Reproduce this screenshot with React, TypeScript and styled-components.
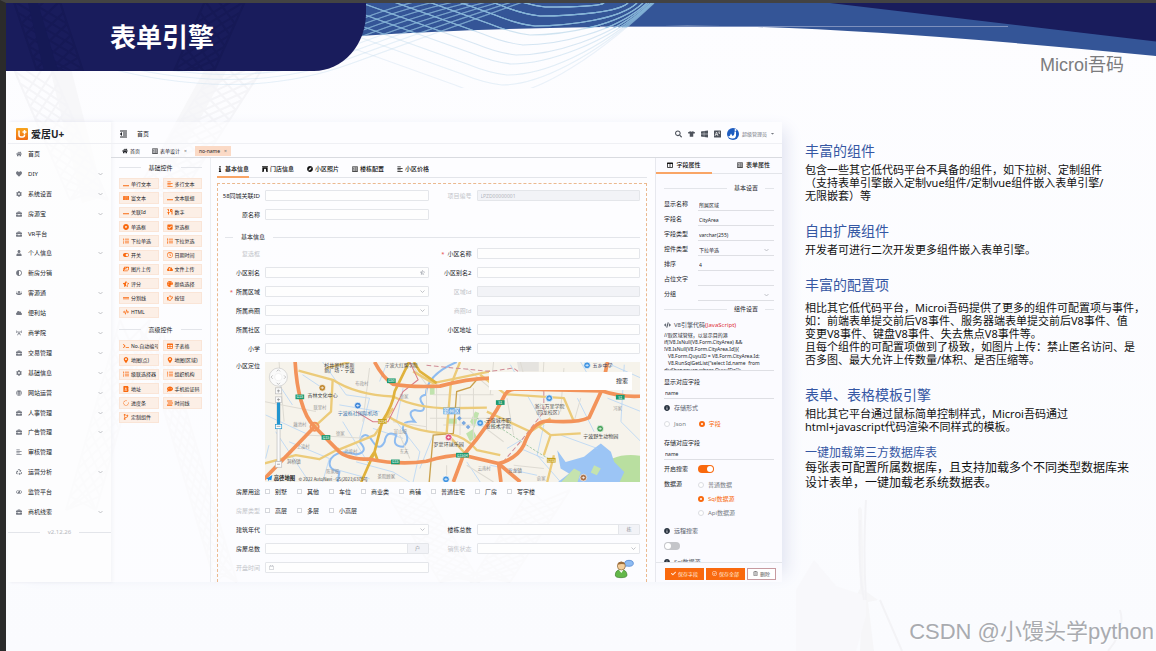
import React, { useId } from 'react';
import styled, { createGlobalStyle } from 'styled-components';
import type { IconType } from 'react-icons';
import {
  FaHome, FaHeart, FaCog, FaBriefcase, FaUser, FaAdjust, FaUsers, FaCloud, FaBroadcastTower, FaGlobe,
  FaAlignLeft, FaRecycle, FaRegEye, FaNewspaper, FaDotCircle, FaCheckSquare, FaListUl, FaList, FaToggleOn,
  FaRegClock, FaImages, FaCloudUploadAlt, FaStarHalfAlt, FaPalette, FaGripLines, FaRegHandPointRight,
  FaCode, FaTerminal, FaTable, FaMapMarkerAlt, FaListOl, FaAddressBook, FaCommentDots, FaSpinner, FaStream,
  FaCodeBranch, FaInfo, FaArchway, FaCompass, FaRegListAlt, FaOutdent, FaSearch, FaTshirt, FaWindows,
  FaCaretDown, FaInfoCircle, FaRegCalendar, FaColumns, FaCheck, FaRegCheckCircle, FaRegTrashAlt,
} from 'react-icons/fa';

const orange = '#f9690e';
const line = '#e3e5ea';
const ink = '#222429';

const Global = createGlobalStyle`
  *, *::before, *::after { box-sizing: border-box; }
  body { margin: 0; background: #2b2b2b; font-family: "Noto Sans", "Noto Sans CJK SC", sans-serif; }
  h1, h2, p, ul { margin: 0; padding: 0; }
  ul { list-style: none; }
  button, input, select, textarea { font: inherit; color: inherit; margin: 0; padding: 0; border: 0; background: none; border-radius: 0; }
  a { color: inherit; text-decoration: none; }
`;

/* ---------- slide frame ---------- */
const Slide = styled.div`
  position: relative;
  min-height: 100vh;
  border-left: 6px solid #2b2b2b;
  border-top: 3px solid #434343;
  background: linear-gradient(#fdfdff, #fafbfe);
  overflow: hidden;
`;
const Backdrop = styled.svg`
  position: absolute;
  inset: 0;
  width: 100%;
  height: 648px;
`;
const Header = styled.header`
  position: relative;
  display: flex;
  justify-content: space-between;
  align-items: flex-start;
  height: 119px;
`;
const TitleBlock = styled.div`
  position: relative;
  width: 360px;
  height: 68px;
  padding-left: 104px;
  display: flex;
  align-items: center;
  overflow: hidden;
  border-bottom-right-radius: 52px 58px;
  background: #191c5c;
`;
const TitlePattern = styled.svg`
  position: absolute;
  inset: 0;
  width: 100%;
  height: 100%;
`;
const Title = styled.h1`
  position: relative;
  color: #fff;
  font-size: 26px;
  line-height: 36px;
  font-weight: 700;
`;
const Brand = styled.div`
  margin: 50px 32px 0 0;
  color: #7c7c7e;
  font-family: "Liberation Sans", "Noto Sans CJK SC", sans-serif;
  font-size: 18px;
  line-height: 24px;
`;
const Body = styled.div`
  position: relative;
  display: flex;
  align-items: flex-start;
`;

/* ---------- app window ---------- */
const AppWindow = styled.section`
  flex: 1;
  min-width: 0;
  display: grid;
  grid-template-columns: 103px minmax(0, 1fr);
  grid-template-rows: minmax(0, 1fr);
  margin-left: 2px;
  height: 460px;
  font-size: 6px;
  line-height: 8px;
  color: ${ink};
  box-shadow: 12px 0 16px -8px #dfe2f0;
`;
const Sidebar = styled.nav`
  display: flex;
  flex-direction: column;
  background: #fefefeb0;
  box-shadow: 2px 0 3px #e6e7ee;
`;
const Logo = styled.div`
  display: flex;
  align-items: center;
  gap: 3px;
  height: 22px;
  padding: 3px 0 0 8px;
  font-size: 10px;
  line-height: 12px;
  font-weight: 700;
  border-bottom: 1px solid #eeeff3;
`;
const Menu = styled.ul`
  display: grid;
  grid-auto-rows: 1fr;
  height: 378px;
`;
const MenuLink = styled.a`
  display: flex;
  align-items: center;
  height: 100%;
  padding: 0 8px;
  > svg:first-child { width: 6px; height: 6px; margin-right: 6px; color: #747882; }
  > span + svg { margin-left: auto; }
`;
const Version = styled.div`
  display: flex;
  align-items: center;
  gap: 8px;
  height: 20px;
  color: #b6b8bd;
  &::before, &::after { content: ''; flex: 1; border-top: 1px solid ${line}; }
`;
const Main = styled.div`
  display: flex;
  flex-direction: column;
  min-width: 0;
  min-height: 0;
  background: #fdfdff99;
`;
const TopBar = styled.div`
  display: flex;
  align-items: center;
  flex: none;
  height: 22px;
  padding: 2px 7px 0 9px;
  border-bottom: 1px solid #eff0f4;
`;
const TopTools = styled.div`
  display: flex;
  align-items: center;
  gap: 6px;
  margin-left: auto;
  color: #4e535c;
  svg { display: block; }
`;
const IconButton = styled.button`
  display: block;
  width: 7px;
  height: 8px;
  > svg { width: 100%; height: 100%; }
`;
const UserButton = styled.button`
  display: flex;
  align-items: center;
  gap: 3px;
  font-size: 5px;
  line-height: 8px;
  color: #777b83;
`;
const Crumb = styled.span`
  margin-left: 10px;
`;
const PageTabs = styled.div`
  display: flex;
  align-items: center;
  flex: none;
  gap: 4px;
  height: 14px;
  padding: 0 7px;
  font-size: 5px;
  border-bottom: 1px solid #d9dbe0;
`;
const PageTab = styled.a<{ $active?: boolean }>`
  display: flex;
  align-items: center;
  gap: 2px;
  height: 10px;
  padding: 0 4px;
  background: ${p => (p.$active ? '#fbdac6' : 'transparent')};
  > svg { width: 6px; height: 6px; }
`;
const CloseMark = styled.span`
  margin-left: 2px;
  color: #777;
`;
const Workspace = styled.div`
  flex: 1;
  min-height: 0;
  display: grid;
  grid-template-columns: 100px minmax(0, 1fr) 127px;
  grid-template-rows: minmax(0, 1fr);
`;

/* ---------- palette ---------- */
const Palette = styled.aside`
  padding: 0 8px;
  border-right: 1px solid #eceef2;
`;
const PaletteTitle = styled.div`
  display: flex;
  align-items: center;
  gap: 8px;
  height: 19px;
  color: ${ink};
  &::before, &::after { content: ''; flex: 1; border-top: 1px solid ${line}; }
`;
const ChipGrid = styled.div<{ $height: number }>`
  display: grid;
  grid-template-columns: 1fr 1fr;
  grid-auto-rows: 1fr;
  gap: 3px 4px;
  height: ${p => p.$height}px;
  margin: 1px 0 2px;
`;
const Chip = styled.button`
  display: flex;
  align-items: center;
  gap: 2px;
  padding-left: 3px;
  overflow: hidden;
  background: #fcefe6;
  border: 1px solid #fae5d7;
  font-size: 5px;
  line-height: 8px;
  white-space: nowrap;
  > svg { width: 6px; height: 6px; color: ${orange}; flex: none; }
`;

/* ---------- form ---------- */
const FormPane = styled.div`
  display: flex;
  flex-direction: column;
  padding: 0 8px 0 6px;
  min-width: 0;
`;
const FormTabs = styled.div`
  display: flex;
  flex: none;
  gap: 13px;
  height: 20px;
  margin-bottom: 5px;
  border-bottom: 1px solid ${line};
`;
const FormTab = styled.button<{ $active?: boolean }>`
  display: flex;
  align-items: center;
  gap: 2px;
  height: 20px;
  padding-top: 4px;
  color: #111;
  font-weight: 500;
  border-bottom: 2px solid ${p => (p.$active ? '#f9a566' : 'transparent')};
  > svg { width: 6px; height: 6px; }
`;
const Canvas = styled.form`
  flex: 1;
  padding: 2px 6px 0 0;
  border: 1px dashed #ebb98f;
  border-bottom: 0;
`;
const FormGrid = styled.div`
  display: grid;
  grid-template-columns: 47px minmax(0, 1fr) 48px minmax(0, 1fr);
  grid-auto-rows: 19px;
  align-items: center;
`;
const FieldLabel = styled.label<{ $dim?: boolean; $required?: boolean }>`
  justify-self: end;
  padding-right: 5px;
  white-space: nowrap;
  color: ${p => (p.$dim ? '#c3c5ca' : ink)};
  &::before { content: ${p => (p.$required ? "'*'" : "''")}; color: #e74c4c; margin-right: 3px; }
`;
const Control = styled.div<{ $filled?: boolean }>`
  position: relative;
  display: flex;
  align-items: center;
  height: 11px;
  border: 1px solid #e4e6ea;
  border-radius: 1px;
  color: #b4b7be;
  background: ${p => (p.$filled ? '#f2f3f7' : '#fefefe')};
  > input, > select { flex: 1; min-width: 0; width: 100%; height: 9px; padding: 0 3px; appearance: none; outline: none; font-size: 5px; opacity: 1; }
  > svg { flex: none; width: 5px; height: 5px; margin: 0 3px; }
`;
const Unit = styled.span`
  align-self: stretch;
  width: 21px;
  text-align: center;
  font-size: 5px;
  line-height: 9px;
  color: #8d9097;
  background: #f2f3f7;
  border-left: 1px solid #e4e6ea;
`;
const SectionRule = styled.div`
  display: flex;
  align-items: center;
  gap: 8px;
  height: 20px;
  padding: 6px 0 0 7px;
  &::before { content: ''; width: 8px; border-top: 1px solid ${line}; }
  &::after { content: ''; flex: 1; border-top: 1px solid ${line}; }
`;
const MapRow = styled.div`
  display: grid;
  grid-template-columns: 47px minmax(0, 1fr);
  padding: 4px 0 0;
`;
const MapFrame = styled.div`
  position: relative;
  height: 120px;
  overflow: hidden;
`;
const MapSvg = styled.svg`
  display: block;
  width: 100%;
  height: 100%;
  font-family: "Noto Sans CJK SC", sans-serif;
`;
const MapSearch = styled.div`
  position: absolute;
  top: 10px;
  right: 8px;
  display: flex;
  align-items: center;
  width: 143px;
  height: 18px;
  padding: 0 4px;
  background: #fefefe;
  > input { flex: 1; min-width: 0; outline: none; }
`;
const ChoiceRow = styled.div`
  display: grid;
  grid-template-columns: 47px minmax(0, 1fr);
  align-items: center;
  height: 19px;
`;
const ChoiceList = styled.div`
  display: flex;
  gap: 10px;
`;
const Check = styled.label`
  display: flex;
  align-items: center;
  gap: 5px;
  white-space: nowrap;
  > input { appearance: none; width: 5px; height: 5px; border: 1px solid #d5d7dc; background: #fff; }
`;
const HelpAnchor = styled.div`
  position: absolute;
  left: 0;
  bottom: 0;
  width: calc(100% - 374px);
`;
const HelpButton = styled.button`
  position: absolute;
  right: 147px;
  bottom: 3px;
  width: 21px;
  height: 20px;
  > svg { display: block; }
`;

/* ---------- properties ---------- */
const Props = styled.aside`
  display: flex;
  flex-direction: column;
  min-height: 0;
  border-left: 1px solid #e7e8ee;
  background: #fbfbff;
`;
const PropTabs = styled.div`
  display: grid;
  grid-template-columns: 56px 1fr;
  height: 16px;
  flex: none;
  border-bottom: 1px solid ${line};
`;
const PropTab = styled.button<{ $active?: boolean }>`
  display: flex;
  align-items: center;
  justify-content: ${p => (p.$active ? 'center' : 'flex-end')};
  gap: 3px;
  height: 16px;
  padding-right: ${p => (p.$active ? 0 : 12)}px;
  font-weight: 500;
  color: #111;
  border-bottom: 2px solid ${p => (p.$active ? '#f9a566' : 'transparent')};
  > svg { width: 6px; height: 6px; }
`;
const PropScroll = styled.div`
  flex: 1;
  min-height: 0;
  overflow: hidden;
  padding: 6px 8px 0;
`;
const PropRule = styled.div`
  display: flex;
  align-items: center;
  gap: 7px;
  height: 16px;
  &::before { content: ''; flex: 1; border-top: 1px solid ${line}; }
  &::after { content: ''; width: 9px; border-top: 1px solid ${line}; }
`;
const PropField = styled.div`
  display: grid;
  grid-template-columns: 34px minmax(0, 1fr);
  height: 15px;
  padding-top: 3px;
  > label { line-height: 10px; }
`;
const Underlined = styled.div`
  display: flex;
  align-items: center;
  border-bottom: 1px solid #dedfe4;
  > input, > select { flex: 1; min-width: 0; width: 100%; height: 9px; padding: 0 1px; appearance: none; outline: none; font-size: 5px; }
  > svg { margin-right: 5px; }
`;
const CodeTitle = styled.label`
  display: flex;
  align-items: center;
  gap: 3px;
  height: 15px;
  color: #444b57;
  white-space: nowrap;
  > svg { width: 7px; height: 6px; }
  em { font-style: normal; color: #e0303a; }
`;
const CodeArea = styled.textarea`
  display: block;
  width: 100%;
  height: 39px;
  resize: none;
  overflow: hidden;
  outline: none;
  white-space: pre;
  font-size: 5px;
  line-height: 7px;
  border-bottom: 1px solid #dedfe4;
`;
const Stacked = styled.div`
  display: flex;
  flex-direction: column;
  height: 28px;
  padding-top: 6px;
  > label { line-height: 10px; }
  > input { flex: 1; width: 100%; padding: 0 1px; border-bottom: 1px solid #dedfe4; outline: none; font-size: 5px; }
`;
const InfoTitle = styled.div`
  display: flex;
  align-items: center;
  gap: 4px;
  height: 17px;
  color: #5a616d;
  > svg { width: 6px; height: 6px; color: #28323f; }
`;
const RadioRow = styled.div`
  display: flex;
  align-items: center;
  gap: 13px;
  height: 16px;
`;
const Radio = styled.label`
  display: flex;
  align-items: center;
  gap: 4px;
  height: 14px;
  color: #777b83;
  > input { appearance: none; width: 6px; height: 6px; border: 1px solid #dbdde2; border-radius: 50%; background: #fff; }
  > input:checked { border: 2px solid ${orange}; }
  &:has(input:checked) { color: ${orange}; }
`;
const SwitchInput = styled.input`
  appearance: none;
  width: 16px;
  height: 8px;
  border-radius: 4px;
  background: #c4c5c9;
  padding: 1px;
  display: flex;
  align-items: center;
  &::before { content: ''; width: 6px; height: 6px; border-radius: 50%; background: #fff; }
  &:checked { background: ${orange}; justify-content: flex-end; }
`;
const SwitchRow = styled.div`
  display: grid;
  grid-template-columns: 34px 1fr;
  align-items: center;
  height: 18px;
`;
const SourceRow = styled.div`
  display: grid;
  grid-template-columns: 34px 1fr;
  align-items: start;
  height: 44px;
  > span { line-height: 12px; }
`;
const LoneSwitch = styled.div`
  display: flex;
  align-items: center;
  height: 14px;
`;
const PropFooter = styled.div`
  display: flex;
  justify-content: flex-end;
  align-items: center;
  gap: 2px;
  height: 20px;
  flex: none;
  padding: 2px 6px 0;
  border-top: 1px solid ${line};
`;
const Action = styled.button<{ $plain?: boolean }>`
  display: flex;
  align-items: center;
  justify-content: center;
  gap: 2px;
  width: ${p => (p.$plain ? 29 : 39)}px;
  height: 12px;
  font-size: 5px;
  line-height: 8px;
  color: ${p => (p.$plain ? '#555' : '#ffe9dc')};
  background: ${p => (p.$plain ? '#fff' : orange)};
  border: 1px solid ${p => (p.$plain ? '#c79aa0' : orange)};
`;

/* ---------- copy ---------- */
const Copy = styled.article`
  flex: none;
  width: 374px;
  padding: 19px 0 0 23px;
  display: flex;
  flex-direction: column;
  gap: 19px;
  color: #111;
  white-space: nowrap;
`;
const Topic = styled.section<{ $gap?: number }>`
  display: flex;
  flex-direction: column;
  gap: ${p => p.$gap ?? 2}px;
`;
const TopicTitle = styled.h2<{ $small?: boolean }>`
  color: #3557a3;
  font-weight: 400;
  font-size: ${p => (p.$small ? 12 : 14)}px;
  line-height: ${p => (p.$small ? 14 : 20)}px;
`;
const TopicText = styled.p<{ $large?: boolean }>`
  font-size: ${p => (p.$large ? 12 : 11)}px;
  line-height: ${p => (p.$large ? 15 : 13)}px;
`;
const LastTopics = styled.div`
  display: flex;
  flex-direction: column;
  gap: 13px;
`;
const Watermark = styled.div`
  position: absolute;
  right: 2px;
  bottom: 5px;
  font-family: "Liberation Sans", "Noto Sans CJK SC", sans-serif;
  font-size: 22px;
  line-height: 28px;
  color: #a9abb0;
  text-shadow: 1px 1px 0 #fff;
`;

/* ---------- small drawings ---------- */
const Chevron = () => (
  <svg width="5" height="4" viewBox="0 0 10 8" fill="none" stroke="#a9acb3" strokeWidth="1.4"><path d="M1 2l4 4 4-4" /></svg>
);
const LowLine: IconType = () => (
  <svg viewBox="0 0 12 12"><path d="M0 8.5h12v2H0z" fill="currentColor" /></svg>
);
const Digits: IconType = () => (
  <svg viewBox="0 0 12 12" fill="none" stroke="currentColor" strokeWidth="2"><path d="M1 1h2v4M3 7v4M1 7h4M7 1h3v4H7zM10 5v6" /></svg>
);
const LocaleIcon = () => (
  <svg viewBox="0 0 14 14">
    <rect width="14" height="14" rx="1" fill="currentColor" />
    <path d="M2 11l3-8 3 8M3 8h4M9 3h3M10 3v3h2" fill="none" stroke="#fff" strokeWidth="1.3" />
  </svg>
);
const LogoMark = () => (
  <svg width="12" height="12" viewBox="0 0 24 24">
    <defs><linearGradient id="lg" x1="0" x2="0" y1="0" y2="1"><stop stopColor="#f7a51d" /><stop offset="1" stopColor="#ef6a14" /></linearGradient></defs>
    <rect width="24" height="24" rx="2" fill="url(#lg)" />
    <path d="M6 5v9a4 4 0 0 0 4 4h3a4 4 0 0 0 4-4v-1M17 4v8M13 8h8" fill="none" stroke="#fff" strokeWidth="3" />
  </svg>
);
const Avatar = () => (
  <svg width="12" height="12" viewBox="0 0 24 24">
    <circle cx="12" cy="12" r="12" fill="#1d5cc0" />
    <path d="M2 17q5-1 6-6l3 5q4-1 4-9h3v9q-1 5-6 5-6 1-10-4z" fill="#fff" />
    <circle cx="17" cy="4" r="2" fill="#fff" />
  </svg>
);
const Assistant = () => (
  <svg width="21" height="20" viewBox="0 0 63 60">
    <ellipse cx="45" cy="13" rx="13" ry="9" fill="#8dbbf2" stroke="#3f78c8" strokeWidth="2" />
    <path d="M34 19l-3 8 9-5z" fill="#8dbbf2" />
    <path d="M4 48q0-16 17-16t18 16q0 8-18 8T4 48z" fill="#63b84a" stroke="#3b7d2c" strokeWidth="2" />
    <path d="M15 33l7 9 6-9z" fill="#fff" />
    <circle cx="22" cy="21" r="12" fill="#f4cf9c" stroke="#8b6236" strokeWidth="2" />
    <path d="M11 17q2-10 12-9 9 1 10 8-11-3-22 1z" fill="#9a6c3b" />
  </svg>
);

const lattice = (x0: number, y0: number, x1: number, y1: number, w: number, n: number) => {
  const segs: string[] = [];
  for (let i = 0; i < n; i++) {
    const a = i / n, b = Math.min(1, (i + 3) / n);
    const ax = x0 + (x1 - x0) * a, ay = y0 + (y1 - y0) * a;
    const bx = x0 + (x1 - x0) * b, by = y0 + (y1 - y0) * b;
    segs.push(`M${ax} ${ay}L${bx + w} ${by}M${ax + w} ${ay}L${bx} ${by}`);
  }
  return `M${x0} ${y0}L${x1} ${y1}M${x0 + w} ${y0}L${x1 + w} ${y1}` + segs.join('');
};

/* each wave: lowest point x, y and the x where it leaves the top edge */
const troughs = [
  [545, 7, 604], [540, 16, 628], [535, 26, 637], [530, 35, 643], [523, 45, 647],
  [516, 55, 649], [511, 64, 651], [507, 75, 652], [502, 85, 653], [495, 96, 654],
];
const wave = (x: number, y: number, end: number) =>
  `M${x - 210} ${y - 72}L${x - 40} ${y - 11}Q${x - 18} ${y - 2} ${x} ${y}C${x + 34} ${y} ${end - (y - 3) * 0.750} ${3 + (y - 3) * 0.700} ${end} 3`;

const Scenery = () => (
  <Backdrop viewBox="6 3 1150 648" preserveAspectRatio="none">
    <path d="M48 60l20-3 36 140-22 6zM210 60l20 4-60 110-20-5z" fill="#f7f7f9" />
    <g fill="none" stroke="#f5f5f8" strokeWidth="2">
      <path d={lattice(10, 60, 70, 200, 38, 12)} />
      <path d={lattice(220, 60, 130, 200, 48, 14)} />
      <path d={lattice(120, 320, 66, 510, 30, 14)} />
      <path d={lattice(140, 330, 215, 582, 22, 18)} />
      <path d={lattice(385, 490, 440, 582, 40, 12)} />
      <path d={lattice(530, 490, 470, 582, 40, 12)} />
    </g>
    <path d="M858 510q2-6 4 0l2 80 14 10-10 2 6 49h-14l2-46-8-6 6-10zM866 500l-1 24z" fill="#f6f6f8" />
    <path d="M796 590l18-30 22 26 30 10v20l-10 35h-60z" fill="#f8f8fb" />
    <path d="M860 520q-2 50 4 80M866 500q-3 50 0 100M880 600l22 51M1120 610q6 20-12 41" fill="none" stroke="#f3f3f6" strokeWidth="2" />
    <path d="M300 3H1156V56Q800 21 640 26.500Q480 28 360 36L300 42z" fill="#345597" />
    <path d="M830 3H1156V41.500z" fill="#191c5c" />
    <path d="M600 26.500H1008" stroke="#7d90bd" strokeWidth="1" />
    <clipPath id="wv"><path d="M100 3H700V88H100z" /></clipPath>
    <clipPath id="bandclip"><path d="M300 3H700V27Q480 28 360 36L300 42z" /></clipPath>
    {[['url(#wv)', '#c4dced', 'w', 0.080], ['url(#bandclip)', '#7fb4d8', 'b', 0.040]].map(([clip, color, key, fade]) => (
      <g key={key} clipPath={clip as string} fill="none" stroke={color as string} strokeWidth="1.100">
        {troughs.map(([x, y, end], i) => (
          <path key={i} opacity={1.050 - i * Number(fade)} d={wave(x, y, end)} />
        ))}
        {[0, 1, 2, 3, 4, 5, 6, 7].map(i => (
          <path key={'s' + i} opacity={key === 'w' ? 0.400 : 0.600} d={`M100 ${66 - i * 5}Q240 ${104 - i * 5} ${350 - i * 2} ${64 - i * 5}T${540 - i * 9} -4`} />
        ))}
      </g>
    ))}
  </Backdrop>
);

/* ---------- map ---------- */
const majorRoads = [
  'M108 22Q112 90 125 135Q140 190 166 215L235 285Q260 312 330 312Q420 330 500 318Q560 300 610 300L715 325Q770 310 790 270Q815 200 860 198Q950 205 985 188L1022 108Q1080 128 1140 124',
  'M345 22Q370 70 400 88Q450 98 540 94Q620 72 690 70',
  'M15 372L166 215', 'M580 380L610 300Q690 210 735 118', 'M715 325L780 380M715 325L722 380', 'M735 118Q745 102 770 102L1022 108L1040 22',
];
const yellowRoads = [
  'M118 48L220 75Q290 120 400 125Q470 160 570 160L680 158', 'M200 40L270 22M220 75L215 170L166 215', 'M235 285L345 240L400 160',
  'M380 180Q450 230 560 235Q620 245 650 285L720 300', 'M600 22L572 92L560 235L620 300', 'M15 325L110 300L180 312L240 280',
  'M660 60L735 118L910 130L940 200', 'M850 300L870 240L830 210M870 240L960 235M880 300L860 380', 'M460 50L520 85L690 50', 'M680 170L810 230L870 190',
];
const minorRoads = [
  'M60 22L75 200M15 140L170 170M140 240L330 250M330 40L310 200M400 200L500 215M500 100V230M530 80V240M600 120V240M640 100V260M520 120H700M510 190H690M550 210H670M700 22L690 120M740 130L760 240M620 40L690 100M450 22L500 90',
  'M780 22L800 100M850 22L845 110M910 40L900 170M960 130L940 200M650 200L730 260M420 240L450 310M560 330V380M620 330L700 380M760 330L850 340',
];
const streams = [
  'M190 22L260 120L330 130M20 180L150 240M50 230L90 290L150 380M90 260L210 310L190 380M250 200L330 330M330 130L300 250M430 100L410 200L480 290L460 380M800 120L850 210L830 300L900 380M960 22L1010 110M900 240L1010 280M750 30L790 100M620 320L660 380M1040 130L1140 170M1050 30L1140 70M290 320L400 350L450 380M60 90L100 150M780 280L850 310',
  'M380 30L360 80M130 60L190 100M240 150L360 170M520 240L480 340M340 220L430 250M690 330L830 360M950 130L1000 230M1090 30L1080 200L1140 260M30 270L20 310M740 280L790 250M220 340L330 370',
];
const shields: [number, number, string, string][] = [
  [395, 78, '#1d9a70', 'G50'], [122, 126, '#1d9a70', 'G15'], [200, 247, '#1d9a70', 'G15'], [407, 320, '#1d9a70', 'G15'], [607, 300, '#1d9a70', 'G1504'],
  [720, 143, '#1d9a70', 'S1'], [1078, 127, '#1d9a70', 'S1'], [368, 199, '#c7a11d', 'S214'], [872, 315, '#c7a11d', 'S215'],
];
const places: [number, number, string, number, string][] = [
  [240, 37, '杉井奥特莱斯', 15, '#444'], [240, 53, '新广场·宁波', 15, '#444'], [190, 127, '吉林文化中心', 15, '#444'], [295, 179, '宁波栎社国际机场', 15, '#3b74b0'],
  [307, 91, '布政村', 13, '#999'], [182, 162, '联里村', 13, '#999'], [122, 214, '藕池村', 13, '#999'], [243, 240, '徐家', 13, '#999'], [132, 280, '上凌村', 13, '#999'],
  [104, 322, '洞桥镇', 14, '#777'], [220, 352, '陈家堰', 13, '#999'], [274, 294, '北渡村', 13, '#999'], [380, 368, '茶院顾家', 13, '#888'], [422, 235, '宣山堰', 13, '#999'],
  [433, 292, '东宋', 13, '#999'], [566, 274, '罗蒙环球乐园', 15, '#444'], [714, 202, '宁波城市职', 15, '#444'], [714, 219, '业技术学院', 15, '#444'],
  [867, 159, '浙江万里学院', 15, '#555'], [862, 177, '(回龙校区)', 15, '#555'], [1020, 248, '宁波野生动物园', 15, '#444'], [764, 349, '五龙镇', 14, '#777'],
  [672, 343, '云南村', 13, '#999'], [842, 375, '俞家', 13, '#999'], [1025, 37, '五乡中学', 15, '#446'], [1070, 164, '冯家', 13, '#999'], [433, 130, '徐家', 13, '#999'], [425, 36, '宁波大红鹰学院', 14, '#555'],
];
const pins: [number, number, string][] = [
  [295, 152, '#3f86d8'], [189, 99, '#c0872d'], [660, 204, '#3f93e0'], [866, 130, '#3f93e0'], [566, 247, '#e0567e'], [1018, 221, '#48a35a'],
  [979, 32, '#3f93e0'], [558, 372, '#3f93e0'], [968, 367, '#a9714a'],
];
const CityMap = () => (
  <MapSvg viewBox="15 22 1125 358" preserveAspectRatio="xMidYMid slice" role="img" aria-label="地图">
    <rect x="0" y="0" width="1160" height="400" fill="#f6f3eb" />
    <path d="M1055 310Q1090 295 1140 302V382H1050z" fill="#b9dfa0" />
    <path d="M890 285L915 320L970 305L1000 280L1020 265L1050 290L1060 320L1090 350L1075 382H890L925 355L900 340z" fill="#9cc5f5" />
    <path d="M900 382L940 340L960 350L950 382zM1000 330l20 10-12 20-18-8z" fill="#c5e3ae" />
    <path d="M510 90h14v30h-14zM630 200l15-30 12 4-14 44zM618 235l20-12 12 22-20 14zM560 190h30v16h-30z" fill="#c0e3ad" />
    <path d="M770 22h65v28h-60z" fill="#e5e3df" />
    <g fill="none" stroke="#a9cff7" strokeWidth="2">{streams.map((d, i) => <path key={i} d={d} />)}</g>
    <path d="M590 22Q500 60 498 120Q470 125 490 150Q500 175 465 165Q440 170 465 200Q425 195 430 225Q455 250 430 275Q395 275 410 240Q380 225 375 260Q360 290 340 260Q315 220 300 260Q330 290 290 298Q240 280 215 310Q200 340 240 350L235 380" fill="none" stroke="#8fbcf0" strokeWidth="6" />
    <g fill="none" stroke="#dedbd3" strokeWidth="3">{minorRoads.map((d, i) => <path key={i} d={d} />)}</g>
    <g fill="none" stroke="#eccb79" strokeWidth="7" strokeLinejoin="round">{yellowRoads.map((d, i) => <path key={i} d={d} />)}</g>
    <path d="M448 22L405 110Q400 150 368 199L345 290L305 380M462 22L480 50L530 85M345 290L355 318M330 312L345 290" fill="none" stroke="#e0b23c" strokeWidth="8" />
    <path d="M650 75L630 98L590 110L580 235L520 240L508 380" fill="none" stroke="#caa14c" strokeWidth="4" />
    <path d="M450 22L475 75L430 110L385 200H340L290 170" fill="none" stroke="#d97b86" strokeWidth="3" />
    <path d="M500 32L690 50L760 40L850 110V170L780 260L720 330" fill="none" stroke="#cf8b96" strokeWidth="3" strokeDasharray="14 8" />
    <path d="M650 190L730 225L830 290L880 320" fill="none" stroke="#86b88c" strokeWidth="2" strokeDasharray="8 4" />
    <g fill="none" stroke="#f3935a" strokeWidth="11" strokeLinejoin="round">{majorRoads.map((d, i) => <path key={i} d={d} />)}</g>
    <circle cx="166" cy="215" r="12" fill="none" stroke="#f3935a" strokeWidth="6" />
    <g textAnchor="middle">
      {shields.map(([x, y, c, t], i) => (
        <g key={i}><rect x={x - (t.length > 4 ? 19 : 13)} y={y - 7} width={t.length > 4 ? 38 : 26} height="14" fill={c} /><text x={x} y={y + 4} fontSize="11" fill="#fff">{t}</text></g>
      ))}
      <rect x="550" y="158" width="50" height="20" fill="#6aa7df" /><text x="575" y="174" fontSize="16" fill="#fff">鄞州区</text>
      {places.map(([x, y, t, s, c], i) => <text key={i} x={x} y={y} fontSize={s} fill={c}>{t}</text>)}
    </g>
    {pins.map(([x, y, c], i) => (
      <g key={i}><circle cx={x} cy={y} r="10" fill={c} stroke="#fff" strokeWidth="2" /><path d={`M${x - 5} ${y}h10M${x} ${y - 4}v8`} stroke="#fff" strokeWidth="2" /></g>
    ))}
    <path d="M598 183l7 7-7 7-7-7zM611 197l7 7-7 7-7-7zM624 209l7 7-7 7-7-7z" fill="#7ba9e0" />
    <circle cx="58" cy="67" r="27" fill="#fafafa" stroke="#c9c9c9" strokeWidth="2" />
    <path d="M53 50l5-5 5 5M53 84l5 5 5-5M41 62l-5 5 5 5M75 62l5 5-5 5" fill="none" stroke="#aaa" strokeWidth="2" />
    <circle cx="58" cy="67" r="11" fill="#fff" stroke="#ddd" />
    <g fill="#fafafa" stroke="#bbb" strokeWidth="2"><rect x="49" y="99" width="19" height="18" /><rect x="49" y="126" width="19" height="17" /><rect x="54" y="143" width="9" height="176" /><rect x="49" y="319" width="19" height="17" /></g>
    <path d="M54 143h9v70h-9z" fill="#2195cf" />
    <rect x="49" y="208" width="19" height="13" fill="#fff" stroke="#2195cf" strokeWidth="2" />
    <path d="M54 108h9M58 104v9M54 134h9M58 130v9M54 327h9M53 214h11" stroke="#888" strokeWidth="2" />
    <path d="M22 370l18-11-3 16-6-2-3 5-1-6z" fill="#1a8fe8" />
    <text x="44" y="375" fontSize="16" fontWeight="700" fill="#222">高德地图</text>
    <text x="118" y="377" fontSize="13" fill="#444">© 2022 AutoNavi - GS(2021)6375号</text>
  </MapSvg>
);

/* ---------- composed fields ---------- */
type FieldProps = { label: string; dim?: boolean; required?: boolean; filled?: boolean; value?: string; kind?: 'text' | 'select'; unit?: string; icon?: React.ReactNode; lead?: React.ReactNode };
const Field = ({ label, dim, required, filled, value = '', kind = 'text', unit, icon, lead }: FieldProps) => {
  const id = useId();
  return (
    <>
      <FieldLabel htmlFor={id} $dim={dim} $required={required}>{label}</FieldLabel>
      <Control $filled={filled}>
        {lead}
        {kind === 'select'
          ? <><select id={id} defaultValue=""><option value="" /></select><Chevron /></>
          : <input id={id} defaultValue={value} readOnly={filled} />}
        {icon}
        {unit && <Unit>{unit}</Unit>}
      </Control>
    </>
  );
};
const Choices = ({ title, items, dim }: { title: string; items: string[]; dim?: boolean }) => (
  <ChoiceRow role="group" aria-label={title}>
    <FieldLabel as="span" $dim={dim}>{title}</FieldLabel>
    <ChoiceList>{items.map(t => <Check key={t}><input type="checkbox" />{t}</Check>)}</ChoiceList>
  </ChoiceRow>
);
const PropInput = ({ label, value = '', select }: { label: string; value?: string; select?: boolean }) => {
  const id = useId();
  return (
    <PropField>
      <label htmlFor={id}>{label}</label>
      <Underlined>
        {select ? <><select id={id} defaultValue={value}><option>{value}</option></select><Chevron /></> : <input id={id} defaultValue={value} />}
      </Underlined>
    </PropField>
  );
};
const StackedInput = ({ label, value }: { label: string; value: string }) => {
  const id = useId();
  return <Stacked><label htmlFor={id}>{label}</label><input id={id} defaultValue={value} /></Stacked>;
};

const menu: [string, IconType, boolean][] = [
  ['首页', FaHome, false], ['DIY', FaHeart, true], ['系统设置', FaCog, true], ['房源宝', FaBriefcase, true], ['VR平台', FaBriefcase, false],
  ['个人信息', FaUser, true], ['新房分销', FaAdjust, false], ['客源通', FaUsers, true], ['便利站', FaCloud, true], ['商学院', FaBroadcastTower, true],
  ['交易管理', FaBriefcase, true], ['基础信息', FaCog, true], ['网站运营', FaGlobe, true], ['人事管理', FaBriefcase, true], ['广告管理', FaBriefcase, true],
  ['审核管理', FaAlignLeft, false], ['运营分析', FaRecycle, true], ['监管平台', FaRegEye, false], ['商机线索', FaBriefcase, true],
];
const basic: [string, IconType][] = [
  ['单行文本', LowLine], ['多行文本', FaAlignLeft], ['富文本', FaNewspaper], ['文本联想', LowLine], ['关联Id', LowLine], ['数字', Digits],
  ['单选框', FaDotCircle], ['复选框', FaCheckSquare], ['下拉单选', FaListUl], ['下拉复选', FaList], ['开关', FaToggleOn], ['日期时间', FaRegClock],
  ['图片上传', FaImages], ['文件上传', FaCloudUploadAlt], ['评分', FaStarHalfAlt], ['颜色选择', FaPalette], ['分割线', FaGripLines], ['按钮', FaRegHandPointRight],
  ['HTML', FaCode],
];
const advanced: [string, IconType][] = [
  ['No.自动编号', FaTerminal], ['子表格', FaTable], ['地图(点)', FaMapMarkerAlt], ['地图(区域)', FaMapMarkerAlt], ['级联选择器', FaListUl], ['组织机构', FaListOl],
  ['地址', FaAddressBook], ['手机验证码', FaCommentDots], ['进度条', FaSpinner], ['时间线', FaStream], ['定制组件', FaCodeBranch],
];
const formTabs: [string, IconType][] = [['基本信息', FaInfo], ['门店信息', FaArchway], ['小区照片', FaCompass], ['楼栋配置', FaRegListAlt], ['小区价格', FaAlignLeft]];
const code = `//取区域管辖，以显示目的港
if(!V8.IsNull(V8.Form.CityArea) &&
!V8.IsNull(V8.Form.CityArea.Id)){
   V8.Form.QuyuID = V8.Form.CityArea.Id;
   V8.RunSqlGetList("select Id,name  from
diyShangquan where QuyuID=");`;

export default function App() {
  return (
    <>
      <Global />
      <Slide>
        <Scenery />
        <Header>
          <TitleBlock>
            <TitlePattern viewBox="6 3 360 68">
              <g fill="none" stroke="#161956" strokeWidth="2">
                <path d={lattice(10, -10, 40, 80, 46, 8)} />
                <path d={lattice(210, -10, 170, 80, 40, 8)} />
              </g>
              <path d="M28 3h10l20 68H44z" fill="#151955" />
            </TitlePattern>
            <Title>表单引擎</Title>
          </TitleBlock>
          <Brand>Microi吾码</Brand>
        </Header>

        <Body>
          <AppWindow>
            <Sidebar>
              <Logo><LogoMark />爱居U+</Logo>
              <Menu>
                {menu.map(([t, Icon, sub]) => (
                  <li key={t}><MenuLink href="#"><Icon /><span>{t}</span>{sub && <Chevron />}</MenuLink></li>
                ))}
              </Menu>
              <Version>v2.12.26</Version>
            </Sidebar>

            <Main>
              <TopBar>
                <IconButton aria-label="折叠"><FaOutdent /></IconButton>
                <Crumb>首页</Crumb>
                <TopTools>
                  <IconButton aria-label="搜索"><FaSearch /></IconButton>
                  <IconButton aria-label="主题"><FaTshirt /></IconButton>
                  <IconButton aria-label="窗口"><FaWindows /></IconButton>
                  <IconButton aria-label="语言"><LocaleIcon /></IconButton>
                  <UserButton><Avatar />超级管理员 <FaCaretDown /></UserButton>
                </TopTools>
              </TopBar>
              <PageTabs>
                <PageTab href="#"><FaHome />首页</PageTab>
                <PageTab href="#"><FaRegListAlt />表单设计<CloseMark>×</CloseMark></PageTab>
                <PageTab href="#" $active>no-name<CloseMark>×</CloseMark></PageTab>
              </PageTabs>

              <Workspace>
                <Palette>
                  <PaletteTitle>基础控件</PaletteTitle>
                  <ChipGrid $height={140}>{basic.map(([t, Icon]) => <Chip key={t}><Icon />{t}</Chip>)}</ChipGrid>
                  <PaletteTitle>高级控件</PaletteTitle>
                  <ChipGrid $height={83}>{advanced.map(([t, Icon]) => <Chip key={t}><Icon />{t}</Chip>)}</ChipGrid>
                </Palette>

                <FormPane>
                  <FormTabs>
                    {formTabs.map(([t, Icon], i) => <FormTab key={t} $active={i === 0}><Icon />{t}</FormTab>)}
                  </FormTabs>
                  <Canvas>
                    <FormGrid>
                      <Field label="58同城关联ID" />
                      <Field label="项目编号" dim filled value="LPZD00000001" />
                      <Field label="原名称" />
                    </FormGrid>
                    <SectionRule>基本信息</SectionRule>
                    <FormGrid>
                      <FieldLabel as="span" $dim>复选框</FieldLabel><span />
                      <Field label="小区名称" required />
                      <Field label="小区别名" icon={<FaStarHalfAlt />} />
                      <Field label="小区别名2" />
                      <Field label="所属区域" required kind="select" />
                      <Field label="区域Id" dim filled />
                      <Field label="所属商圈" kind="select" />
                      <Field label="商圈Id" dim filled />
                      <Field label="所属社区" />
                      <Field label="小区地址" />
                      <Field label="小学" />
                      <Field label="中学" />
                    </FormGrid>
                    <MapRow>
                      <FieldLabel as="span">小区定位</FieldLabel>
                      <MapFrame>
                        <CityMap />
                        <MapSearch><input aria-label="搜索地点" /><button type="button">搜索</button></MapSearch>
                      </MapFrame>
                    </MapRow>
                    <Choices title="房屋用途" items={['别墅', '其他', '车位', '商业类', '商铺', '普通住宅', '厂房', '写字楼']} />
                    <Choices title="房屋类型" dim items={['高层', '多层', '小高层']} />
                    <FormGrid>
                      <Field label="建筑年代" kind="select" />
                      <Field label="楼栋总数" unit="栋" />
                      <Field label="房屋总数" unit="户" />
                      <Field label="销售状态" dim kind="select" />
                      <Field label="开盘时间" dim lead={<FaRegCalendar />} />
                    </FormGrid>
                  </Canvas>
                </FormPane>

                <Props>
                  <PropTabs>
                    <PropTab $active><FaColumns />字段属性</PropTab>
                    <PropTab><FaRegListAlt />表单属性</PropTab>
                  </PropTabs>
                  <PropScroll>
                    <PropRule>基本设置</PropRule>
                    <PropInput label="显示名称" value="所属区域" />
                    <PropInput label="字段名" value="CityArea" />
                    <PropInput label="字段类型" value="varchar(255)" />
                    <PropInput label="控件类型" value="下拉单选" select />
                    <PropInput label="排序" value="4" />
                    <PropInput label="占位文字" />
                    <PropInput label="分组" select />
                    <PropRule>组件设置</PropRule>
                    <CodeTitle htmlFor="v8code"><FaCode /><span>V8引擎代码<em>(JavaScript)</em></span></CodeTitle>
                    <CodeArea id="v8code" defaultValue={code} />
                    <StackedInput label="显示对应字段" value="name" />
                    <InfoTitle><FaInfoCircle />存储形式</InfoTitle>
                    <RadioRow>
                      <Radio><input type="radio" name="store" />Json</Radio>
                      <Radio><input type="radio" name="store" defaultChecked />字段</Radio>
                    </RadioRow>
                    <StackedInput label="存储对应字段" value="name" />
                    <SwitchRow><label htmlFor="searchable">开启搜索</label><SwitchInput id="searchable" type="checkbox" defaultChecked /></SwitchRow>
                    <SourceRow>
                      <span>数据源</span>
                      <div>
                        <Radio><input type="radio" name="source" />普通数据</Radio>
                        <Radio><input type="radio" name="source" defaultChecked />Sql数据源</Radio>
                        <Radio><input type="radio" name="source" />Api数据源</Radio>
                      </div>
                    </SourceRow>
                    <InfoTitle><FaInfoCircle />远程搜索</InfoTitle>
                    <LoneSwitch><SwitchInput type="checkbox" aria-label="远程搜索" /></LoneSwitch>
                    <InfoTitle><FaInfoCircle />Sql数据源</InfoTitle>
                  </PropScroll>
                  <PropFooter>
                    <Action><FaCheck />保存字段</Action>
                    <Action><FaRegCheckCircle />保存全部</Action>
                    <Action $plain><FaRegTrashAlt />删除</Action>
                  </PropFooter>
                </Props>
              </Workspace>
            </Main>
          </AppWindow>
          <Copy>
            <Topic>
              <TopicTitle>丰富的组件</TopicTitle>
              <TopicText>包含一些其它低代码平台不具备的组件，如下拉树、定制组件<br />（支持表单引擎嵌入定制vue组件/定制vue组件嵌入表单引擎/<br />无限嵌套）等</TopicText>
            </Topic>
            <Topic>
              <TopicTitle>自由扩展组件</TopicTitle>
              <TopicText>开发者可进行二次开发更多组件嵌入表单引擎。</TopicText>
            </Topic>
            <Topic $gap={6}>
              <TopicTitle>丰富的配置项</TopicTitle>
              <TopicText>相比其它低代码平台，Microi吾码提供了更多的组件可配置项与事件，<br />如：前端表单提交前后V8事件、服务器端表单提交前后V8事件、值<br />变更V8事件、键盘V8事件、失去焦点V8事件等。<br />且每个组件的可配置项做到了极致，如图片上传：禁止匿名访问、是<br />否多图、最大允许上传数量/体积、是否压缩等。</TopicText>
            </Topic>
            <LastTopics>
              <Topic>
                <TopicTitle>表单、表格模板引擎</TopicTitle>
                <TopicText>相比其它平台通过鼠标简单控制样式，Microi吾码通过<br />html+javascript代码渲染不同样式的模板。</TopicText>
              </Topic>
              <Topic $gap={0}>
                <TopicTitle $small>一键加载第三方数据库表</TopicTitle>
                <TopicText $large>每张表可配置所属数据库，且支持加载多个不同类型数据库来<br />设计表单，一键加载老系统数据表。</TopicText>
              </Topic>
            </LastTopics>
          </Copy>
          <HelpAnchor><HelpButton aria-label="在线客服"><Assistant /></HelpButton></HelpAnchor>
        </Body>
        <Watermark>CSDN @小馒头学python</Watermark>
      </Slide>
    </>
  );
}
